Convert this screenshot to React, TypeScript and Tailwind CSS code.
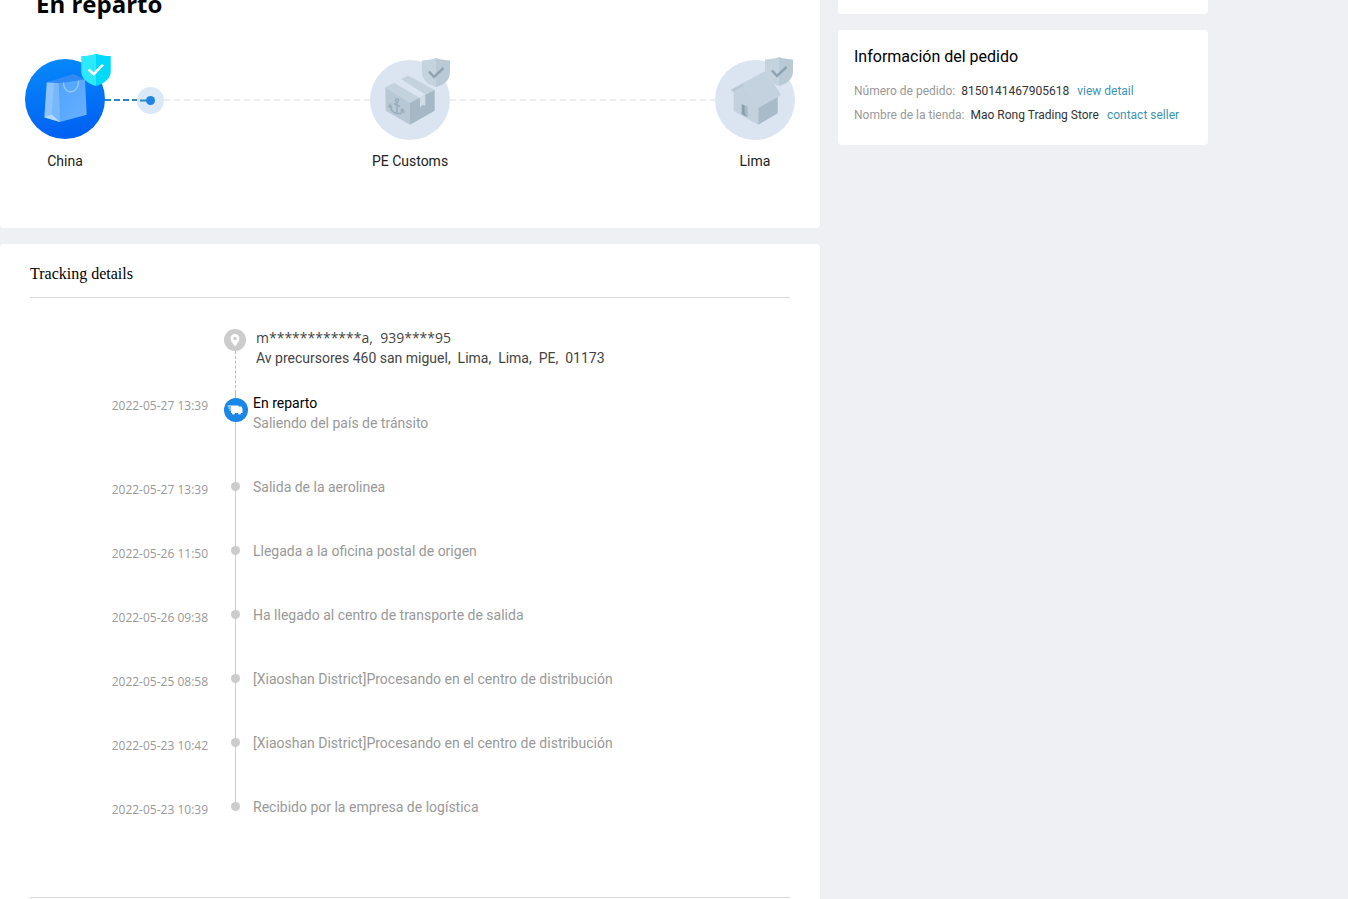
import React from 'react';

interface TrackingEvent {
  time: string;
  text: string;
}

const events: TrackingEvent[] = [
  { time: '2022-05-27 13:39', text: 'Salida de la aerolinea' },
  { time: '2022-05-26 11:50', text: 'Llegada a la oficina postal de origen' },
  { time: '2022-05-26 09:38', text: 'Ha llegado al centro de transporte de salida' },
  { time: '2022-05-25 08:58', text: '[Xiaoshan District]Procesando en el centro de distribución' },
  { time: '2022-05-23 10:42', text: '[Xiaoshan District]Procesando en el centro de distribución' },
  { time: '2022-05-23 10:39', text: 'Recibido por la empresa de logística' },
];

const BagIcon: React.FC = () => (
  <svg viewBox="0 0 80 80" className="h-20 w-20 overflow-visible" aria-hidden="true">
    <defs>
      <linearGradient id="bagCircle" x1="0" y1="0" x2="0.2" y2="1">
        <stop offset="0" stopColor="#078bfb" />
        <stop offset="1" stopColor="#0062f2" />
      </linearGradient>
      <linearGradient id="bagFront" x1="0" y1="0" x2="1" y2="1">
        <stop offset="0" stopColor="#4fa3fd" />
        <stop offset="1" stopColor="#68b0ff" />
      </linearGradient>
    </defs>
    <circle cx="40" cy="40" r="40" fill="url(#bagCircle)" />
    <path d="M21.7 23.3 48.3 15 60 20.3 34.3 24.3Z" fill="#2f8af6" />
    <path d="M21.7 23.3 34.3 24.3 35 63 19.3 58.3Z" fill="#8cc3ff" />
    <path d="M26.7 55.3 35 63 19.3 58.3Z" fill="#b5d9ff" />
    <path d="M26.7 55.3 29 24 34.3 24.3 35 63Z" fill="#79b7fd" />
    <path d="M34.3 24.3 60 20.3 61.7 55.7 35 63Z" fill="url(#bagFront)" />
    <path d="M38.5 24c0 12 15 12 15-1.5" fill="none" stroke="#8fc8ff" strokeWidth="1.5" strokeLinecap="round" />
    <path d="M71-5.3C66-3.500 61-3 56.3-3V12.5C56.3 19 62 24.5 71 27Z" fill="#2de9fd" />
    <path d="M71-5.3C76-3.500 81-3 85.7-3V12.5C85.7 19 80 24.5 71 27Z" fill="#00d8fc" />
    <path d="M63.5 10.5 68.7 15.2 78 5.7" fill="none" stroke="#fff" strokeWidth="2.5" />
  </svg>
);

const GrayShield: React.FC = () => (
  <>
    <path d="M66-1C61 1 56 1 52 1.5V13C52 21 58 26 66 28Z" fill="#c5d3df" />
    <path d="M66-1C71 1 76 1 80 1.5V13C80 21 74 26 66 28Z" fill="#b9c9d6" />
    <path d="M59 12.5 64 18 73.5 9" fill="none" stroke="#8fa3b3" strokeWidth="2.5" />
  </>
);

const BoxIcon: React.FC = () => (
  <svg viewBox="0 0 80 80" className="h-20 w-20 overflow-visible" aria-hidden="true">
    <circle cx="40" cy="41" r="40" fill="#dbe5f1" />
    <path d="M15.3 28.3 38 16.5 64.7 31 40 43.7Z" fill="#c4d2de" />
    <path d="M15.3 28.3 40 43.7V65.7L15.7 51.7Z" fill="#b9c8d5" />
    <path d="M40 43.7 64.7 31V51.7L40 65.7Z" fill="#a6b8c6" />
    <path d="M24 23.8 31 20 55.3 35.5 49.5 38.8Z" fill="#dbe5f1" />
    <path d="M50 38.5 55.3 35.7V46.5L52.7 46 50 48.5Z" fill="#d0dce7" />
    <g fill="none" stroke="#9aadbc" strokeWidth="1.5">
      <circle cx="27" cy="41.5" r="1.5" />
      <path d="M27 43V54M24 44.5 30 47.5M20 46C20 51.5 23 53.5 27 54.5 30.5 55.5 32.5 54 32.5 50.5M18.5 48 20 45.5 22 49M30.5 52 32.5 50 34 54" />
    </g>
    <GrayShield />
  </svg>
);

const HouseIcon: React.FC = () => (
  <svg viewBox="0 0 80 80" className="h-20 w-20 overflow-visible" aria-hidden="true">
    <circle cx="40" cy="41" r="40" fill="#dbe5f1" />
    <path d="M18.7 32 27.7 25 43.3 48V65.7L18.7 52Z" fill="#c3d1de" />
    <path d="M43.3 48 62.7 37V54.3L43.3 65.7Z" fill="#a9bac8" />
    <path d="M27.7 24.3 51 11.7 66 36 42.7 49.5Z" fill="#c4d2df" />
    <path d="M15.3 31 27.7 24.3 29 26.5 18.7 33Z" fill="#b9c8d5" />
    <path d="M26.7 45 32.3 47.7V58L26.7 55.3Z" fill="#8d9fae" />
    <path d="M29.7 46.5 32.3 47.7V58L29.7 54Z" fill="#a9b9c6" />
    <g transform="translate(-2 -1)">
      <GrayShield />
    </g>
  </svg>
);

interface StepProps {
  label: string;
  children: React.ReactNode;
}

const Step: React.FC<StepProps> = ({ label, children }) => (
  <li className="flex w-20 flex-col items-center gap-3">
    {children}
    <span className="whitespace-nowrap text-sm leading-5 text-[#222]">{label}</span>
  </li>
);

const DashedLine: React.FC = () => (
  <svg className="h-0.5 min-w-0 flex-1" aria-hidden="true">
    <line x1="0" y1="1" x2="100%" y2="1" stroke="#eceef1" strokeWidth="2" strokeDasharray="6 4" />
  </svg>
);

const TruckBadge: React.FC = () => (
  <svg viewBox="0 0 24 24" className="h-6 w-6 shrink-0 self-start" aria-hidden="true">
    <circle cx="12" cy="12" r="12" fill="#1a86e8" />
    <path d="M7 7.5H14.5V8.5H17.5L18.5 11V15H17A1.500 1.500 0 0 1 14 15H11A1.500 1.500 0 0 1 8 15H7V12.5H5.500V11.5H7V10.5H4.5V9.500H7V8.5H3.5V7.5Z" fill="#fff" />
  </svg>
);

const PinBadge: React.FC = () => (
  <svg viewBox="0 0 23 23" className="h-[23px] w-[23px] shrink-0" aria-hidden="true">
    <circle cx="11" cy="12" r="11" fill="#ccc" />
    <path
      fillRule="evenodd"
      d="M11 6A4.5 4.5 0 0 0 6.5 10.5C6.5 13.3 9 15.5 11 18.5 13 15.5 15.5 13.3 15.5 10.5A4.5 4.5 0 0 0 11 6ZM11 8.8A1.7 1.7 0 1 1 11 12.2 1.7 1.7 0 0 1 11 8.8Z"
      fill="#fff"
    />
  </svg>
);

const OrderInfo: React.FC = () => (
  <section className="rounded bg-white px-4 pt-[17px] pb-[18px]">
    <h2 className="text-base leading-5 text-black">Información del pedido</h2>
    <dl className="mt-3 text-xs leading-6">
      <div className="flex">
        <dt className="mr-1.5 text-[#999]">Número de pedido:</dt>
        <dd className="flex gap-2 text-[#333]">
          8150141467905618
          <a href="#detail" className="text-[#3f93b3]">view detail</a>
        </dd>
      </div>
      <div className="flex">
        <dt className="mr-1.5 text-[#999]">Nombre de la tienda:</dt>
        <dd className="flex gap-2 text-[#333]">
          Mao Rong Trading Store
          <a href="#seller" className="text-[#3f93b3]">contact seller</a>
        </dd>
      </div>
    </dl>
  </section>
);

const EventTime: React.FC<{ value: string }> = ({ value }) => (
  <time className="mr-4 w-[178px] shrink-0 pt-[3px] text-right font-['Open_Sans',sans-serif] text-xs leading-5 text-[#999]">
    {value}
  </time>
);

const App: React.FC = () => {
  return (
    <div className="flex min-h-screen flex-col overflow-hidden bg-[#eff0f4] font-['Roboto',sans-serif]">
      <div className="flex w-full max-w-[1208px] grow gap-[18px]">
        <main className="flex min-w-0 flex-1 flex-col gap-4">
          <section className="rounded-b bg-white pb-[57px]">
            <h1 className="-mt-3 pl-9 font-['Open_Sans',sans-serif] text-2xl leading-8 font-bold text-black">En reparto</h1>
            <ol className="mt-[39px] flex items-start px-[25px]">
              <Step label="China">
                <BagIcon />
              </Step>
              <li className="flex h-[82px] min-w-0 flex-1 items-center" aria-hidden="true">
                <svg className="h-0.5 w-8 shrink-0">
                  <line x1="0" y1="1" x2="32" y2="1" stroke="#2f86c4" strokeWidth="2" strokeDasharray="6 3" />
                </svg>
                <svg viewBox="0 0 27 27" className="h-[27px] w-[27px] shrink-0">
                  <circle cx="13.5" cy="13.5" r="13.5" fill="#dbe8f7" />
                  <path d="M3 13.5H10" stroke="#2f86c4" strokeWidth="2" />
                  <circle cx="13.5" cy="13.5" r="4.5" fill="#1f84e6" />
                </svg>
                <DashedLine />
              </li>
              <Step label="PE Customs">
                <BoxIcon />
              </Step>
              <li className="flex h-[82px] min-w-0 flex-1 items-center" aria-hidden="true">
                <DashedLine />
              </li>
              <Step label="Lima">
                <HouseIcon />
              </Step>
            </ol>
          </section>

          <section className="grow rounded-t bg-white px-[30px] pt-5 pb-px">
            <h2 className="border-b border-[#d8d8d8] pb-[13px] font-['Liberation_Serif',serif] text-base leading-5 text-black">
              Tracking details
            </h2>

            <div className="border-b border-[#d8d8d8] pt-[30px] pb-[77px]">
              {/* Destination address */}
              <div className="flex min-h-[65px] pl-[194px]">
                <div className="flex w-[23px] shrink-0 flex-col items-center">
                  <PinBadge />
                  <div className="w-px flex-1 border-l border-dashed border-[#bbb]" />
                </div>
                <address className="pl-[9px] text-sm leading-5 whitespace-pre-wrap text-[#444] not-italic">
                  <p className="font-['Open_Sans',sans-serif]">{'m************a,  939****95'}</p>
                  <p>{'Av precursores 460 san miguel,  Lima,  Lima,  PE,  01173'}</p>
                </address>
              </div>

              <ol>
                <li className="flex min-h-[84px]">
                  <EventTime value="2022-05-27 13:39" />
                  <div className="flex w-[23px] shrink-0 flex-col items-center">
                    <div className="h-[5px] border-l border-dashed border-[#bbb]" />
                    <TruckBadge />
                    <div className="w-px flex-1 bg-[#ccc]" />
                  </div>
                  <div className="pl-1.5 text-sm leading-5">
                    <p className="text-black">En reparto</p>
                    <p className="text-[#999]">Saliendo del país de tránsito</p>
                  </div>
                </li>
                {events.map((event, i) => (
                  <li key={i} className="flex min-h-16 last:min-h-0">
                    <EventTime value={event.time} />
                    <div className="flex w-[23px] shrink-0 flex-col items-center">
                      <div className="h-[5px] w-px bg-[#ccc]" />
                      <div className="h-[9px] w-[9px] rounded-full bg-[#ccc]" />
                      {i < events.length - 1 && <div className="w-px flex-1 bg-[#ccc]" />}
                    </div>
                    <p className="pl-1.5 text-sm leading-5 text-[#999]">{event.text}</p>
                  </li>
                ))}
              </ol>
            </div>
          </section>
        </main>

        <aside className="flex w-[370px] shrink-0 flex-col gap-4">
          <div className="h-3.5 rounded-b bg-white" />
          <OrderInfo />
        </aside>
      </div>
    </div>
  );
};

export default App;
